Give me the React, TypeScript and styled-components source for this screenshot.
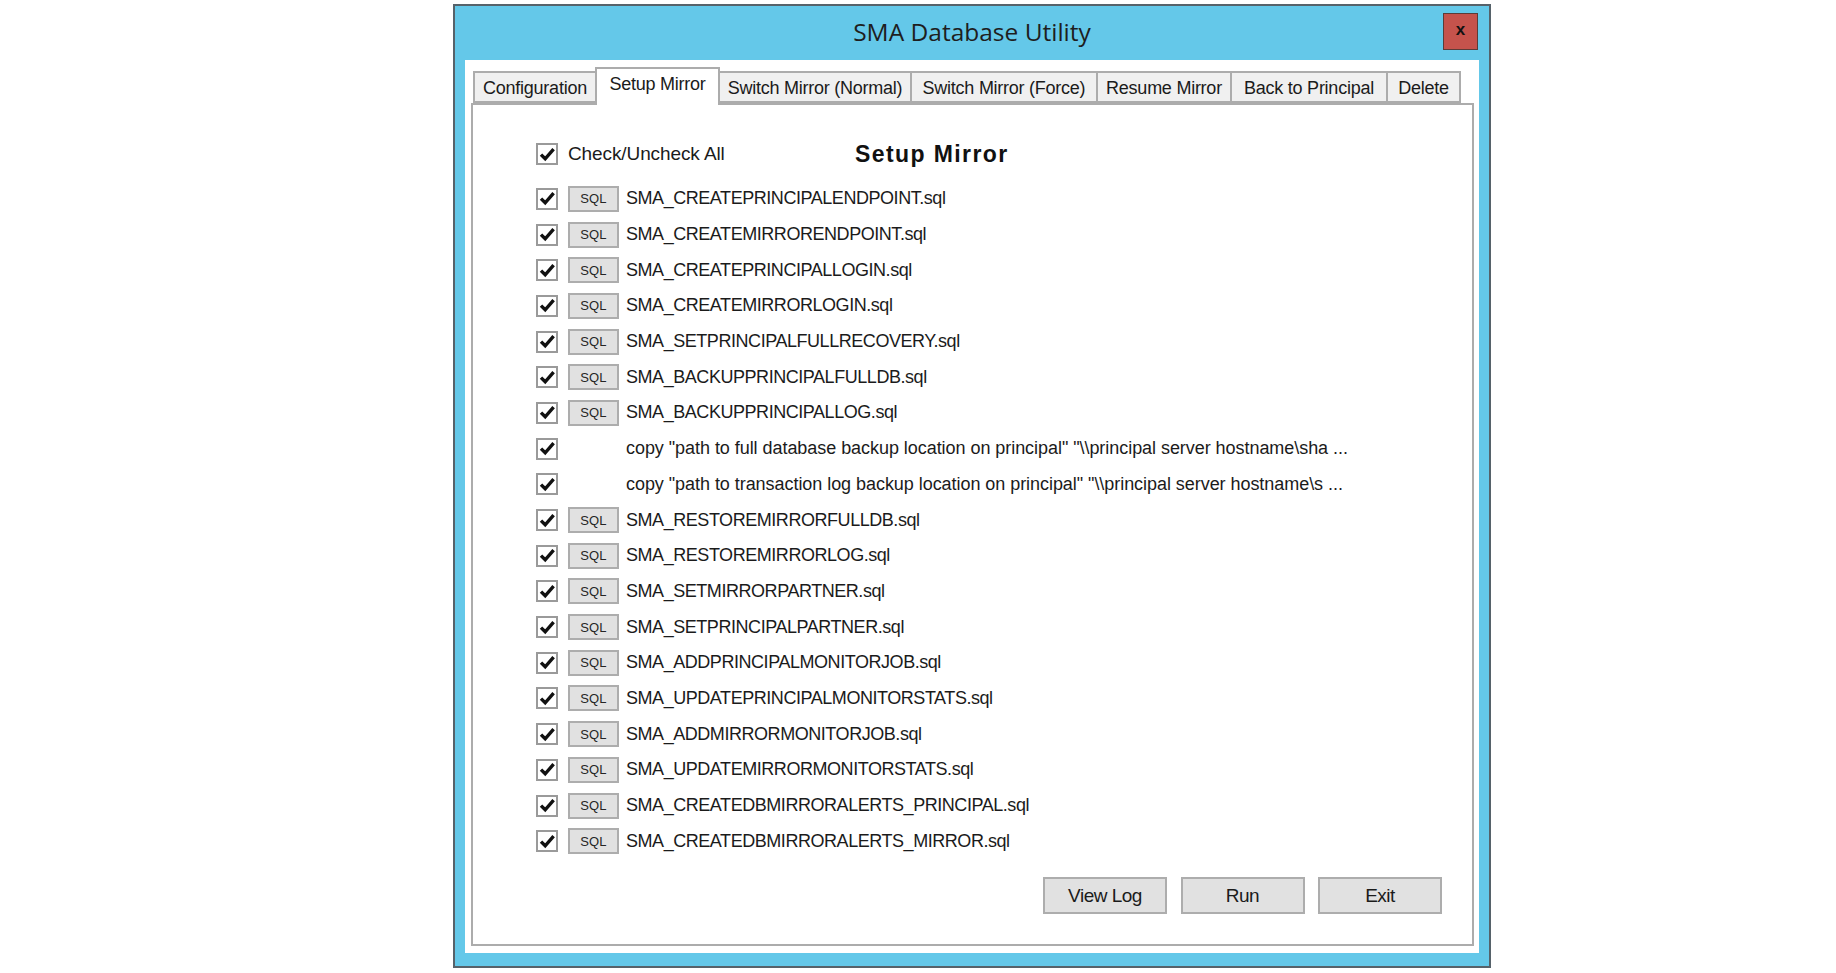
import React from "react";
import styled, { createGlobalStyle } from "styled-components";

const GlobalStyle = createGlobalStyle`
  html, body { margin: 0; padding: 0; background: #ffffff; }
  body { font-family: "Liberation Sans", Arial, sans-serif; color: #1b1b1b; }
  * { box-sizing: border-box; }
`;

const Page = styled.div`
  padding: 4px 0 0 453px;
  width: 1836px;
  height: 973px;
`;

const Window = styled.div`
  width: 1038px;
  height: 964px;
  border: 2px solid #56626a;
  background: #64c8e9;
  display: flex;
  flex-direction: column;
  padding: 0 10px 13px 10px;
`;

const TitleBar = styled.div`
  height: 54px;
  display: grid;
  grid-template-columns: 1fr auto 1fr;
  align-items: center;
`;

const Title = styled.div`
  grid-column: 2;
  font-family: "Open Sans", "Noto Sans", sans-serif;
  font-size: 24.5px;
  color: #1e1e1e;
  line-height: 1;
  padding-bottom: 1px;
`;

const CloseButton = styled.div`
  grid-column: 3;
  justify-self: end;
  align-self: start;
  margin-top: 7px;
  margin-right: 1px;
  width: 35px;
  height: 37px;
  background: #c5534c;
  border: 1px solid #5b3c38;
  display: flex;
  align-items: center;
  justify-content: center;
  font-family: "Liberation Sans", Arial, sans-serif;
  font-weight: 700;
  font-size: 17px;
  color: #111;
  padding-bottom: 3px;
`;

const Client = styled.div`
  flex: 1;
  background: #ffffff;
  padding: 7px 5px 7px 6px;
  display: flex;
  flex-direction: column;
`;

const TabStrip = styled.div`
  height: 36px;
  display: flex;
  align-items: flex-end;
  padding-left: 2px;
`;

const Tab = styled.div<{ $w: number; $active?: boolean }>`
  width: ${(p) => p.$w}px;
  height: ${(p) => (p.$active ? 38 : 32)}px;
  margin-bottom: ${(p) => (p.$active ? -2 : 0)}px;
  background: ${(p) => (p.$active ? "#ffffff" : "#f0f0f0")};
  border: 2px solid #acacac;
  border-bottom: ${(p) => (p.$active ? "none" : "2px solid #acacac")};
  margin-left: -2px;
  &:first-child { margin-left: 0; }
  position: relative;
  z-index: ${(p) => (p.$active ? 2 : 1)};
  display: flex;
  align-items: ${(p) => (p.$active ? "flex-start" : "center")};
  padding-top: ${(p) => (p.$active ? "5px" : "3px")};
  justify-content: center;
  font-size: 18px;
  letter-spacing: -0.25px;
  color: #1b1b1b;
  white-space: nowrap;
`;

const Panel = styled.div`
  flex: 1;
  border: 2px solid #acacac;
  display: flex;
  flex-direction: column;
  padding: 31.5px 30px 30px 63px;
`;

const HeaderRow = styled.div`
  height: 35.7px;
  margin-bottom: 8.8px;
  display: flex;
  align-items: center;
`;

const CheckAllGroup = styled.div`
  flex: 0 0 319px;
  display: flex;
  align-items: center;
  gap: 10px;
`;

const CheckAllLabel = styled.span`
  font-size: 19px;
  letter-spacing: -0.1px;
`;

const SectionTitle = styled.span`
  font-size: 23px;
  font-weight: 700;
  letter-spacing: 1.4px;
  color: #111;
`;

const List = styled.div`
  display: flex;
  flex-direction: column;
`;

const Row = styled.div`
  height: 35.7px;
  display: flex;
  align-items: center;
`;

const Box = styled.span`
  width: 22px;
  height: 22px;
  border: 2px solid #9a9a9a;
  background: #fff;
  display: inline-flex;
  align-items: center;
  justify-content: center;
  flex: 0 0 auto;
`;

const SqlButton = styled.span`
  margin-left: 10px;
  width: 51px;
  height: 26px;
  background: #e1e1e1;
  border: 2px solid #adadad;
  display: inline-flex;
  align-items: center;
  justify-content: center;
  font-size: 13px;
  letter-spacing: 0.2px;
  color: #262626;
  flex: 0 0 auto;
`;

const SqlSpacer = styled.span`
  margin-left: 10px;
  width: 51px;
  flex: 0 0 auto;
`;

const FileName = styled.span`
  margin-left: 7px;
  font-size: 18px;
  letter-spacing: -0.45px;
  white-space: nowrap;
`;

const CommandText = styled.span`
  margin-left: 7px;
  font-size: 18px;
  letter-spacing: -0.05px;
  white-space: nowrap;
`;

const ButtonRow = styled.div`
  margin-top: auto;
  display: flex;
  justify-content: flex-end;
  gap: 13.5px;
`;

const PushButton = styled.div`
  width: 124px;
  height: 37px;
  background: #e1e1e1;
  border: 2px solid #adadad;
  display: flex;
  align-items: center;
  justify-content: center;
  font-size: 19px;
  letter-spacing: -0.5px;
  color: #1b1b1b;
`;

const CheckBox = () => (
  <Box>
    <svg width="17" height="17" viewBox="0 0 17 17">
      <path d="M2 8.6 L6.2 12.8 L14.6 3.2" fill="none" stroke="#111" strokeWidth="3.4" strokeLinejoin="miter" />
    </svg>
  </Box>
);

const tabs: { label: string; w: number; active?: boolean }[] = [
  { label: "Configuration", w: 124 },
  { label: "Setup Mirror", w: 125, active: true },
  { label: "Switch Mirror (Normal)", w: 194 },
  { label: "Switch Mirror (Force)", w: 188 },
  { label: "Resume Mirror", w: 136 },
  { label: "Back to Principal", w: 158 },
  { label: "Delete", w: 75 },
];

type Item = { sql: boolean; text: string };

const items: Item[] = [
  { sql: true, text: "SMA_CREATEPRINCIPALENDPOINT.sql" },
  { sql: true, text: "SMA_CREATEMIRRORENDPOINT.sql" },
  { sql: true, text: "SMA_CREATEPRINCIPALLOGIN.sql" },
  { sql: true, text: "SMA_CREATEMIRRORLOGIN.sql" },
  { sql: true, text: "SMA_SETPRINCIPALFULLRECOVERY.sql" },
  { sql: true, text: "SMA_BACKUPPRINCIPALFULLDB.sql" },
  { sql: true, text: "SMA_BACKUPPRINCIPALLOG.sql" },
  {
    sql: false,
    text: 'copy "path to full database backup location on principal" "\\\\principal server hostname\\sha ...',
  },
  {
    sql: false,
    text: 'copy "path to transaction log backup location on principal" "\\\\principal server hostname\\s ...',
  },
  { sql: true, text: "SMA_RESTOREMIRRORFULLDB.sql" },
  { sql: true, text: "SMA_RESTOREMIRRORLOG.sql" },
  { sql: true, text: "SMA_SETMIRRORPARTNER.sql" },
  { sql: true, text: "SMA_SETPRINCIPALPARTNER.sql" },
  { sql: true, text: "SMA_ADDPRINCIPALMONITORJOB.sql" },
  { sql: true, text: "SMA_UPDATEPRINCIPALMONITORSTATS.sql" },
  { sql: true, text: "SMA_ADDMIRRORMONITORJOB.sql" },
  { sql: true, text: "SMA_UPDATEMIRRORMONITORSTATS.sql" },
  { sql: true, text: "SMA_CREATEDBMIRRORALERTS_PRINCIPAL.sql" },
  { sql: true, text: "SMA_CREATEDBMIRRORALERTS_MIRROR.sql" },
];

export default function App() {
  return (
    <Page>
      <GlobalStyle />
      <Window>
        <TitleBar>
          <Title>SMA Database Utility</Title>
          <CloseButton>x</CloseButton>
        </TitleBar>
        <Client>
          <TabStrip>
            {tabs.map((t) => (
              <Tab key={t.label} $w={t.w} $active={t.active}>
                {t.label}
              </Tab>
            ))}
          </TabStrip>
          <Panel>
            <HeaderRow>
              <CheckAllGroup>
                <CheckBox />
                <CheckAllLabel>Check/Uncheck All</CheckAllLabel>
              </CheckAllGroup>
              <SectionTitle>Setup Mirror</SectionTitle>
            </HeaderRow>
            <List>
              {items.map((it, i) => (
                <Row key={i}>
                  <CheckBox />
                  {it.sql ? <SqlButton>SQL</SqlButton> : <SqlSpacer />}
                  {it.sql ? <FileName>{it.text}</FileName> : <CommandText>{it.text}</CommandText>}
                </Row>
              ))}
            </List>
            <ButtonRow>
              <PushButton>View Log</PushButton>
              <PushButton>Run</PushButton>
              <PushButton>Exit</PushButton>
            </ButtonRow>
          </Panel>
        </Client>
      </Window>
    </Page>
  );
}
